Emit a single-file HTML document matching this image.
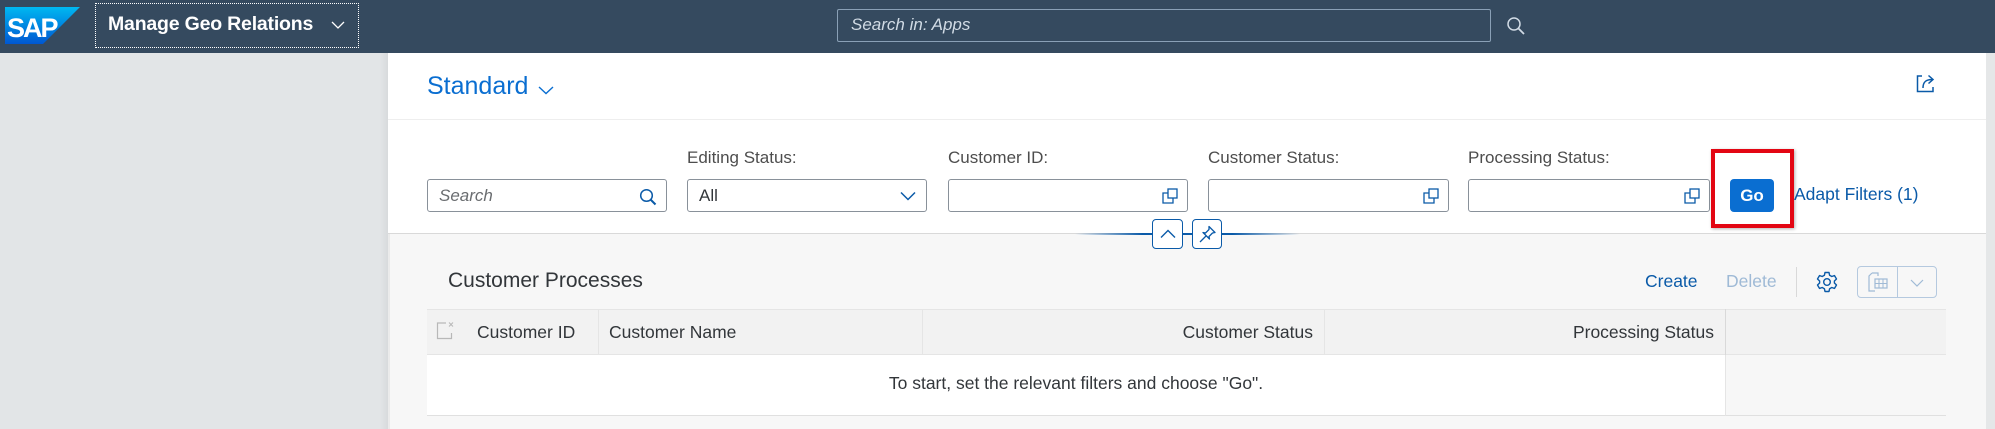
<!DOCTYPE html>
<html><head><meta charset="utf-8"><style>
*{box-sizing:border-box;margin:0;padding:0}
body{width:1995px;height:429px;overflow:hidden;background:#f7f7f7;font-family:"Liberation Sans",sans-serif;position:relative;color:#32363a}
.a{position:absolute}
.inp{position:absolute;top:179px;height:33px;border:1px solid #89919a;border-radius:3px;background:#fff}
.lbl{position:absolute;top:148px;font-size:17px;color:#4d4d4d}
.vh{position:absolute;right:9px;top:8px}
.th{position:absolute;top:309px;height:46px;line-height:46px;font-size:17.5px;color:#32363a}
</style></head><body>
<div class="a" style="left:0;top:0;width:1995px;height:53px;background:#354a5f"></div>
<svg class="a" style="left:5px;top:7px" width="75" height="37" viewBox="0 0 75 37"><defs><linearGradient id="g" x1="0" y1="0" x2="0" y2="1"><stop offset="0" stop-color="#00b8f1"/><stop offset="1" stop-color="#0057d2"/></linearGradient></defs><polygon points="0,0 75,0 38,37 0,37" fill="url(#g)"/><text x="2" y="30" font-family="Liberation Sans" font-weight="bold" font-size="27" fill="#fff" letter-spacing="-2">SAP</text></svg>
<div class="a" style="left:95px;top:3px;width:264px;height:45px;border:1px dotted #fff"></div>
<div class="a" style="left:108px;top:13px;font-size:19.5px;font-weight:bold;color:#fff;letter-spacing:-0.2px">Manage Geo Relations</div>
<svg class="a" style="left:331px;top:20px" width="14" height="10"><path d="M1 2 L7 8 L13 2" stroke="#fff" fill="none" stroke-width="1.3"/></svg>
<div class="a" style="left:837px;top:9px;width:654px;height:33px;border:1px solid #8aa0b6;border-radius:2px"></div>
<div class="a" style="left:851px;top:15px;font-size:17px;font-style:italic;color:#d1dbe5">Search in: Apps</div>
<svg class="a" style="left:1506px;top:16px" width="20" height="20"><circle cx="8" cy="8" r="6" stroke="#d1dbe5" stroke-width="1.5" fill="none"/><path d="M12.5 12.5 L18 18" stroke="#d1dbe5" stroke-width="1.8"/></svg>
<div class="a" style="left:0;top:53px;width:388px;height:376px;background:#e2e5e7"></div>
<div class="a" style="left:380px;top:53px;width:10px;height:376px;background:linear-gradient(90deg,rgba(0,0,0,0),rgba(0,0,0,.06))"></div>
<div class="a" style="left:1986px;top:53px;width:9px;height:376px;background:#e5e7e8"></div>
<div class="a" style="left:388px;top:53px;width:1598px;height:181px;background:#fff;border-bottom:1px solid #d9d9d9"></div>
<div class="a" style="left:388px;top:119px;width:1598px;height:1px;background:#eee"></div>
<div class="a" style="left:427px;top:72px;font-size:25px;color:#0a6ed1">Standard</div>
<svg class="a" style="left:538px;top:85px" width="16" height="10"><path d="M1 2 L8 8.5 L15 2" stroke="#0a6ed1" fill="none" stroke-width="1.4"/></svg>
<svg class="a" style="left:1916px;top:73px" width="21" height="20"><path d="M6 3 H1.5 V18.5 H17 V14" stroke="#0a5aa8" fill="none" stroke-width="1.5"/><path d="M7 15 C7 9 10 6.5 16 6.5 M12.5 2.5 L17 6.5 L12.5 10.5" stroke="#0a5aa8" fill="none" stroke-width="1.5"/></svg>
<div class="lbl" style="left:687px">Editing Status:</div>
<div class="lbl" style="left:948px">Customer ID:</div>
<div class="lbl" style="left:1208px">Customer Status:</div>
<div class="lbl" style="left:1468px">Processing Status:</div>
<div class="inp" style="left:427px;width:240px"><span class="a" style="left:11px;top:6px;font-size:17px;font-style:italic;color:#6a6d70">Search</span><svg class="vh" width="18" height="18"><circle cx="7.5" cy="7.5" r="5.8" stroke="#0a5aa8" stroke-width="1.5" fill="none"/><path d="M11.5 11.5 L16.5 16.5" stroke="#0a5aa8" stroke-width="2"/></svg></div>
<div class="inp" style="left:687px;width:240px"><span class="a" style="left:11px;top:6px;font-size:17px;color:#32363a">All</span><svg class="a" style="right:10px;top:11px" width="16" height="10"><path d="M1 1.5 L8 8.5 L15 1.5" stroke="#0a5aa8" fill="none" stroke-width="1.5"/></svg></div>
<div class="inp" style="left:948px;width:240px"><svg class="vh" width="16" height="16"><rect x="6" y="1" width="9" height="9" stroke="#0a5aa8" fill="none" stroke-width="1.3"/><path d="M6 5 H1 V15 H11 V10" stroke="#0a5aa8" fill="none" stroke-width="1.3"/></svg></div>
<div class="inp" style="left:1208px;width:241px"><svg class="vh" width="16" height="16"><rect x="6" y="1" width="9" height="9" stroke="#0a5aa8" fill="none" stroke-width="1.3"/><path d="M6 5 H1 V15 H11 V10" stroke="#0a5aa8" fill="none" stroke-width="1.3"/></svg></div>
<div class="inp" style="left:1468px;width:242px"><svg class="vh" width="16" height="16"><rect x="6" y="1" width="9" height="9" stroke="#0a5aa8" fill="none" stroke-width="1.3"/><path d="M6 5 H1 V15 H11 V10" stroke="#0a5aa8" fill="none" stroke-width="1.3"/></svg></div>
<div class="a" style="left:1711px;top:149px;width:83px;height:79px;border:4px solid #e30613;box-shadow:1px 1px 3px rgba(0,0,0,.3)"></div>
<div class="a" style="left:1730px;top:179px;width:44px;height:33px;background:#0a6ed1;border-radius:4px;color:#fff;font-weight:bold;font-size:17px;text-align:center;line-height:33px">Go</div>
<div class="a" style="left:1794px;top:184px;font-size:17.5px;color:#0a5aa8">Adapt Filters (1)</div>
<div class="a" style="left:1075px;top:233px;width:225px;height:2px;background:linear-gradient(90deg,rgba(10,90,168,0),#0a5aa8 30%,#0a5aa8 70%,rgba(10,90,168,0))"></div>
<div class="a" style="left:1152px;top:219px;width:31px;height:30px;background:#fff;border:1px solid #0a5aa8;border-radius:4px"><svg class="a" style="left:7px;top:9px" width="16" height="10"><path d="M1 8.5 L8 1.5 L15 8.5" stroke="#0a5aa8" fill="none" stroke-width="1.4"/></svg></div>
<div class="a" style="left:1192px;top:219px;width:30px;height:30px;background:#fff;border:1px solid #0a5aa8;border-radius:4px"><svg class="a" style="left:5px;top:5px" width="19" height="19"><path d="M11 1.5 L17 7.5 L14.5 8 L11 11.5 L11.5 14 L5 7.5 L7.5 8 L11 4.5 Z M8 11 L2 17" stroke="#0a5aa8" fill="none" stroke-width="1.3" stroke-linejoin="round"/></svg></div>
<div class="a" style="left:448px;top:269px;font-size:21px;color:#32363a">Customer Processes</div>
<div class="a" style="left:1645px;top:271px;font-size:17.5px;color:#0a5aa8">Create</div>
<div class="a" style="left:1726px;top:271px;font-size:17.5px;color:#9fbad6">Delete</div>
<div class="a" style="left:1796px;top:267px;width:1px;height:30px;background:#d9d9d9"></div>
<svg class="a" style="left:1816px;top:271px" width="22" height="22" viewBox="0 0 22 22"><path d="M9 1.5 H13 L13.6 4.3 L15.8 5.5 L18.5 4.6 L20.5 8 L18.4 10 V12 L20.5 14 L18.5 17.4 L15.8 16.5 L13.6 17.7 L13 20.5 H9 L8.4 17.7 L6.2 16.5 L3.5 17.4 L1.5 14 L3.6 12 V10 L1.5 8 L3.5 4.6 L6.2 5.5 L8.4 4.3 Z" stroke="#0a5aa8" stroke-width="1.4" fill="none" stroke-linejoin="round"/><circle cx="11" cy="11" r="3.3" stroke="#0a5aa8" stroke-width="1.4" fill="none"/></svg>
<div class="a" style="left:1857px;top:266px;width:80px;height:32px;border:1px solid #b5c9df;border-radius:4px;background:#f7f7f7"><div class="a" style="left:39px;top:0;width:1px;height:30px;background:#b5c9df"></div>
<svg class="a" style="left:9px;top:5px" width="22" height="21"><path d="M5 1 H11 V4 M5 1 L2 4 V19 H8" stroke="#9fbad6" fill="none" stroke-width="1.2"/><rect x="8" y="7" width="12" height="9" stroke="#9fbad6" fill="none" stroke-width="1.2"/><path d="M8 11.5 H20 M12 7 V16 M16 7 V16" stroke="#9fbad6" stroke-width="1"/></svg>
<svg class="a" style="left:52px;top:12px" width="14" height="8"><path d="M1 1 L7 7 L13 1" stroke="#9fbad6" fill="none" stroke-width="1.2"/></svg></div>
<div class="a" style="left:427px;top:309px;width:1519px;height:46px;background:#f2f2f2;border-top:1px solid #e5e5e5;border-bottom:1px solid #e5e5e5"></div>
<div class="a" style="left:427px;top:355px;width:1298px;height:61px;background:#fff;border-bottom:1px solid #e0e0e0"></div>
<div class="a" style="left:1725px;top:355px;width:221px;height:61px;border-bottom:1px solid #e0e0e0;border-left:1px solid #e5e5e5"></div>
<div class="a" style="left:598px;top:309px;width:1px;height:46px;background:#e5e5e5"></div>
<div class="a" style="left:922px;top:309px;width:1px;height:46px;background:#e5e5e5"></div>
<div class="a" style="left:1324px;top:309px;width:1px;height:46px;background:#e5e5e5"></div>
<div class="a" style="left:1725px;top:309px;width:1px;height:46px;background:#d9d9d9"></div>
<svg class="a" style="left:436px;top:321px" width="20" height="19"><path d="M10 2 H1.5 V17.5 H15.5 V12" stroke="#b8b8b8" fill="none" stroke-width="1.2"/><path d="M13 1.5 L17 5.5 M17 1.5 L13 5.5" stroke="#b8b8b8" stroke-width="1"/></svg>
<div class="th" style="left:477px">Customer ID</div>
<div class="th" style="left:609px">Customer Name</div>
<div class="th" style="left:922px;width:391px;text-align:right">Customer Status</div>
<div class="th" style="left:1324px;width:390px;text-align:right">Processing Status</div>
<div class="a" style="left:427px;top:373px;width:1298px;text-align:center;font-size:17.5px;color:#32363a">To start, set the relevant filters and choose "Go".</div>
</body></html>
